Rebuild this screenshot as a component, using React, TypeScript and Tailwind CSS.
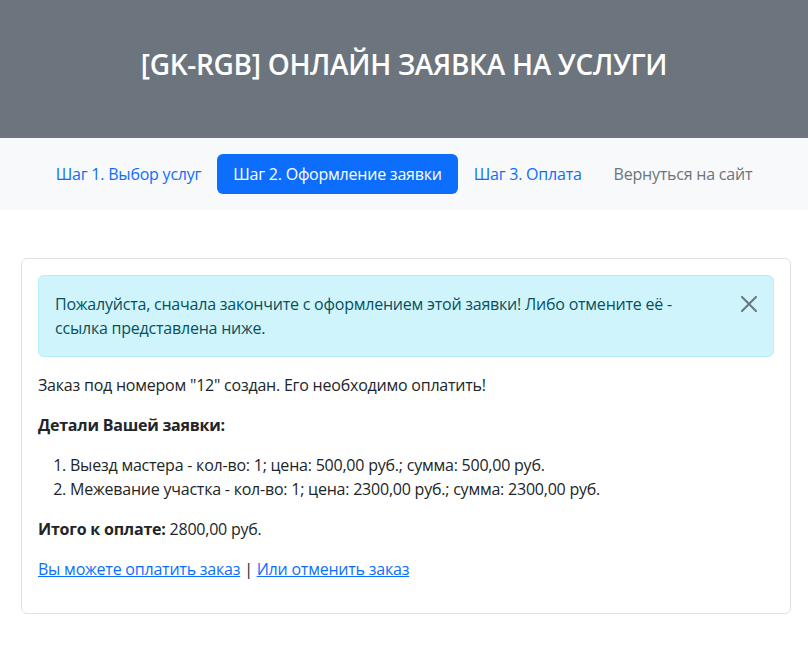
export default function App() {
    const font = { fontFamily: '"Open Sans", "Noto Sans", sans-serif' };
    return (
        <main className="min-h-[646px] bg-white text-[#212529] text-[16px] leading-6 tracking-[-0.22px]" style={font}>
            <header className="h-[138px] bg-[#6c757d] flex items-center justify-center">
                <h1 className="mb-2 text-white text-[28px] font-semibold leading-[1.2] uppercase tracking-[-0.3px]">
                    [GK-RGB] Онлайн заявка на услуги
                </h1>
            </header>

            <nav className="bg-[#f8f9fa] py-4 flex justify-center">
                <a className="px-4 py-2 text-[#0d6efd]">Шаг 1. Выбор услуг</a>
                <a className="px-4 py-2 text-white bg-[#0d6efd] rounded-md">Шаг 2. Оформление заявки</a>
                <a className="px-4 py-2 text-[#0d6efd]">Шаг 3. Оплата</a>
                <a className="px-4 py-2 text-[#6c757d]">Вернуться на сайт</a>
            </nav>

            <section className="pt-12">
                <div className="ml-[21px] w-[770px] border border-[#dee2e6] rounded-md p-4">
                    <div className="relative mb-4 border border-[#b6effb] bg-[#cff4fc] text-[#055160] rounded-md p-4 pr-12">
                        Пожалуйста, сначала закончите с оформлением этой заявки! Либо отмените её - ссылка представлена ниже.
                        <button className="absolute top-0 right-0 px-4 py-5 opacity-50" aria-label="Close">
                            <svg width="16" height="16" viewBox="0 0 16 16" fill="#000">
                                <path d="M.293.293a1 1 0 0 1 1.414 0L8 6.586 14.293.293a1 1 0 1 1 1.414 1.414L9.414 8l6.293 6.293a1 1 0 0 1-1.414 1.414L8 9.414l-6.293 6.293a1 1 0 0 1-1.414-1.414L6.586 8 .293 1.707a1 1 0 0 1 0-1.414" />
                            </svg>
                        </button>
                    </div>
                    <p className="mb-4">Заказ под номером "12" создан. Его необходимо оплатить!</p>
                    <p className="mb-4 font-bold">Детали Вашей заявки:</p>
                    <ol className="mb-4 pl-8 list-decimal">
                        <li>Выезд мастера - кол-во: 1; цена: 500,00 руб.; сумма: 500,00 руб.</li>
                        <li>Межевание участка - кол-во: 1; цена: 2300,00 руб.; сумма: 2300,00 руб.</li>
                    </ol>
                    <p className="mb-4">
                        <b>Итого к оплате:</b> 2800,00 руб.
                    </p>
                    <p className="mb-4">
                        <a className="text-[#0d6efd] underline">Вы можете оплатить заказ</a> |{" "}
                        <a className="text-[#0d6efd] underline">Или отменить заказ</a>
                    </p>
                </div>
            </section>
        </main>
    );
}
